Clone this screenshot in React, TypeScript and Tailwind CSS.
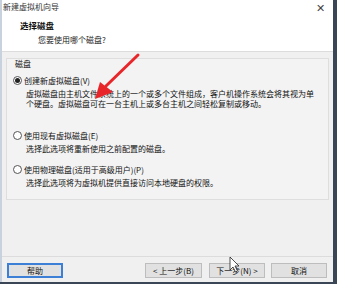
import React from "react";

const font = { fontFamily: '"Noto Sans CJK SC", "Noto Sans", sans-serif' };

function Radio({ checked }: { checked?: boolean }) {
  return (
    <span className="w-[9px] h-[9px] rounded-full border border-[#555] bg-white flex items-center justify-center shrink-0">
      {checked && <span className="w-[5px] h-[5px] rounded-full bg-[#222]" />}
    </span>
  );
}

function Btn({ children, focused, w }: { children: React.ReactNode; focused?: boolean; w: string }) {
  return (
    <div
      className={`${w} h-[15px] flex items-center justify-center text-[8px] leading-none text-[#111] bg-[#e1e1e1] ${
        focused ? "border-2 border-[#3c7fd6]" : "border border-[#bdbdbd]"
      }`}
    >
      {children}
    </div>
  );
}

export default function App() {
  return (
    <div className="w-[337px] h-[284px] relative overflow-hidden bg-[#3a4656]" style={font}>
      <div className="w-[333px] h-[282px] flex flex-col bg-[#f0f0f0] border-l-2 border-[#c7d2de]">
        {/* title + header white area */}
        <div className="bg-white h-[52px] flex flex-col border-b border-[#dcdcdc]">
          <div className="h-[14px] flex items-center justify-between pl-[1px] pr-[8px]">
            <span className="text-[8px] leading-none text-[#333]">新建虚拟机向导</span>
            <span className="text-[11px] leading-none text-[#444]">✕</span>
          </div>
          <div className="pl-[18px] pt-[7px] text-[8.5px] leading-none font-bold text-[#111]">选择磁盘</div>
          <div className="pl-[36px] pt-[6px] text-[8px] leading-none text-[#222]">您要使用哪个磁盘?</div>
        </div>

        {/* group box */}
        <div className="ml-[4px] mr-[4px] mt-[6px] h-[142px] border border-[#dedede] bg-[#f3f3f3] flex flex-col px-[8px] pt-[1px] text-[8px] leading-none text-[#111]">
          <div>磁盘</div>
          <div className="flex flex-col mt-[8px]">
            <div className="flex items-center gap-[2px] -ml-[2px]">
              <Radio checked />
              <span>创建新虚拟磁盘(V)</span>
            </div>
            <div className="pl-[11px] mt-[4px] leading-[10px]">
              虚拟磁盘由主机文件系统上的一个或多个文件组成，客户机操作系统会将其视为单
              <br />
              个硬盘。虚拟磁盘可在一台主机上或多台主机之间轻松复制或移动。
            </div>
          </div>
          <div className="flex flex-col mt-[22px]">
            <div className="flex items-center gap-[2px] -ml-[2px]">
              <Radio />
              <span>使用现有虚拟磁盘(E)</span>
            </div>
            <div className="pl-[11px] mt-[5px]">选择此选项将重新使用之前配置的磁盘。</div>
          </div>
          <div className="flex flex-col mt-[12px]">
            <div className="flex items-center gap-[2px] -ml-[2px]">
              <Radio />
              <span>使用物理磁盘(适用于高级用户)(P)</span>
            </div>
            <div className="pl-[11px] mt-[5px]">选择此选项将为虚拟机提供直接访问本地硬盘的权限。</div>
          </div>
        </div>

        <div className="flex-1" />
        <div className="border-t border-[#dcdcdc] h-[26px] flex items-start pt-[6px] pl-[5px] pr-[6px]">
          <Btn focused w="w-[56px]">帮助</Btn>
          <div className="flex-1" />
          <Btn w="w-[57px]">&lt; 上一步(B)</Btn>
          <div className="w-[7px]" />
          <Btn w="w-[56px]">下一步(N) &gt;</Btn>
          <div className="w-[6px]" />
          <Btn w="w-[56px]">取消</Btn>
        </div>
      </div>

      {/* red annotation arrow */}
      <svg className="absolute left-0 top-0" width="337" height="284" viewBox="0 0 337 284">
        <path d="M138 55 L106 86" stroke="#e8262a" strokeWidth="3" strokeLinecap="round" />
        <polygon points="95,99 100,82 113,92" fill="#e8262a" />
      </svg>

      {/* mouse cursor */}
      <svg className="absolute left-[229px] top-[256px]" width="12" height="18" viewBox="0 0 12 18">
        <path d="M1 1 L1 14 L4 11 L6.5 16 L8.5 15 L6 10 L10 10 Z" fill="white" stroke="#222" strokeWidth="0.8" />
      </svg>
    </div>
  );
}
